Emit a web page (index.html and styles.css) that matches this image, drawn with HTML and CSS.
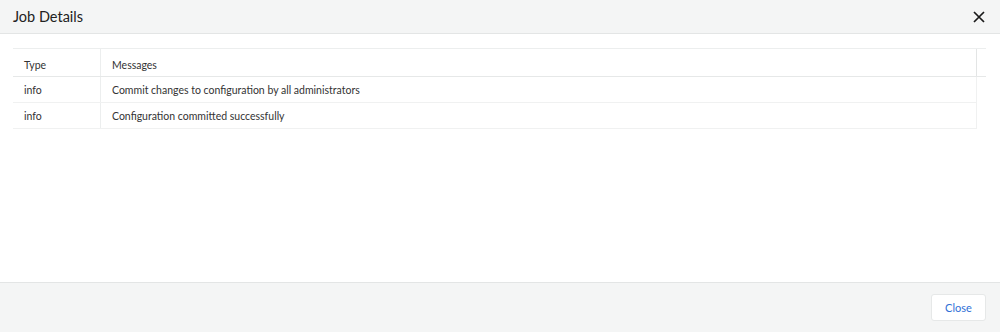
FILE: index.html
```html
<!DOCTYPE html>
<html>
<head>
    <title>Job Details</title>
    <link rel="stylesheet" href="styles.css">
</head>
<body>
    <div class="modal">
        <div class="modal-header">
            <h1>Job Details</h1>
            <button class="close-x" aria-label="Close">
                <svg width="12" height="12" viewBox="0 0 12 12">
                    <path d="M1 1 L11 11 M11 1 L1 11" stroke="#1a1a1a" stroke-width="1.7" fill="none"/>
                </svg>
            </button>
        </div>
        <div class="modal-body">
            <div class="grid">
                <div class="grid-head">
                    <div class="cell col-type">Type</div>
                    <div class="cell col-msg">Messages</div>
                    <div class="cell col-scroll"></div>
                </div>
                <div class="grid-row">
                    <div class="cell col-type">info</div>
                    <div class="cell col-msg">Commit changes to configuration by all administrators</div>
                </div>
                <div class="grid-row">
                    <div class="cell col-type">info</div>
                    <div class="cell col-msg">Configuration committed successfully</div>
                </div>
            </div>
        </div>
        <div class="modal-footer">
            <button class="btn">Close</button>
        </div>
    </div>
</body>
</html>
```

FILE: styles.css
```css
body {
    font-family: Lato, "Liberation Sans", sans-serif;
    margin: 0;
    padding: 0;
    background: #fff;
    color: #333;
}

.modal {
    height: 332px;
    display: flex;
    flex-direction: column;
}

.modal-header {
    height: 33px;
    padding: 0 13px;
    background-color: #f4f5f5;
    border-bottom: 1px solid #e3e5e5;
    display: flex;
    justify-content: space-between;
    align-items: center;
}

.modal-header h1 {
    margin: 0;
    font-size: 14.5px;
    font-weight: 400;
    color: #222;
}

.close-x {
    background: none;
    border: none;
    padding: 0;
    margin-right: 2px;
    display: flex;
    cursor: pointer;
}

.modal-body {
    flex: 1;
    padding: 14px 14px 0 13px;
}

.grid {
    font-size: 10.5px;
    color: #333;
}

.grid-head,
.grid-row {
    display: flex;
}

.grid-head {
    height: 27px;
    border-top: 1px solid #eceeee;
    border-bottom: 1px solid #e6e8e8;
}

.grid-row {
    height: 25px;
    width: 963px;
    border-bottom: 1px solid #f0f1f1;
    border-right: 1px solid #f0f1f1;
}

.cell {
    display: flex;
    align-items: center;
    padding: 0 10px 0 11px;
}

.col-type {
    width: 66px;
    border-right: 1px solid #eceeee;
}

.col-msg {
    flex: 1;
}

.grid-head .col-type {
    padding-top: 4px;
}

.grid-head .col-msg {
    padding-top: 4px;
    border-right: 1px solid #e3e5e5;
}

.col-scroll {
    width: 9px;
    padding: 0;
}

.modal-footer {
    height: 49px;
    background-color: #f4f5f5;
    border-top: 1px solid #e3e5e5;
    display: flex;
    justify-content: flex-end;
    align-items: center;
    padding: 0 14px;
}

.btn {
    font-family: Lato, "Liberation Sans", sans-serif;
    font-size: 11px;
    color: #2f6fd6;
    background: #fff;
    border: 1px solid #e6e8e8;
    border-radius: 3px;
    width: 55px;
    height: 27px;
    margin-top: -1px;
    cursor: pointer;
}
```
